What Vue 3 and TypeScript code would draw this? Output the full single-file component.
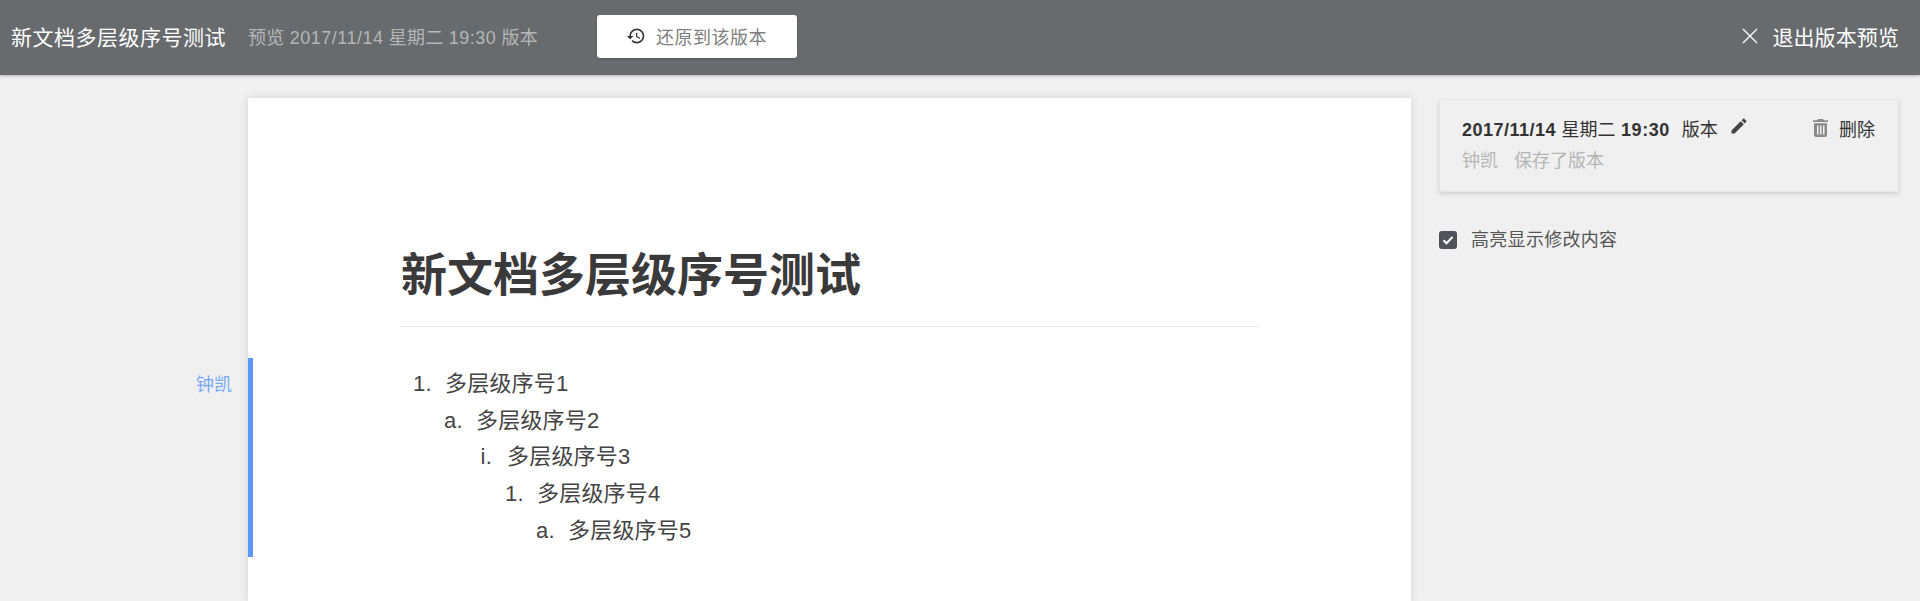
<script setup lang="ts">
interface ListItem {
  marker: string;
  text: string;
}

const title = '新文档多层级序号测试';

const items: ListItem[] = [
  { marker: '1.', text: '多层级序号1' },
  { marker: 'a.', text: '多层级序号2' },
  { marker: 'i.', text: '多层级序号3' },
  { marker: '1.', text: '多层级序号4' },
  { marker: 'a.', text: '多层级序号5' }
];
</script>

<template>
  <div class="app">
    <header class="topbar">
      <span class="doc-name">{{ title }}</span>
      <span class="preview-info">预览 <span class="num">2017/11/14</span> 星期二 <span class="num">19:30</span> 版本</span>
      <button class="restore" type="button">
        <svg width="20" height="20" viewBox="0 0 24 24" fill="#333">
          <path d="M13 3a9 9 0 0 0-9 9H1l3.89 3.89.07.14L9 12H6c0-3.87 3.13-7 7-7s7 3.13 7 7-3.13 7-7 7c-1.93 0-3.68-.79-4.94-2.06l-1.42 1.42A8.954 8.954 0 0 0 13 21a9 9 0 0 0 0-18zm-1 5v5l4.28 2.54.72-1.21-3.5-2.08V8H12z" />
        </svg>
        <span>还原到该版本</span>
      </button>
      <button class="exit" type="button">
        <svg width="16" height="16" viewBox="0 0 16 16" fill="none" stroke="#fff" stroke-width="1.4">
          <path d="M1 1l14 14M15 1L1 15" />
        </svg>
        <span>退出版本预览</span>
      </button>
    </header>

    <main class="workspace">
      <article class="doc">
        <h1 class="doc-title">{{ title }}</h1>
        <section class="changed">
          <span class="author">钟凯</span>
          <div
            v-for="(item, i) in items"
            :key="i"
            class="row"
            :class="`level-${i}`"
          >
            <span class="marker">{{ item.marker }}</span>
            <span>{{ item.text }}</span>
          </div>
        </section>
      </article>

      <aside class="side">
        <div class="version-card">
          <div class="version-main">
            <span class="version-date">2017/11/14 <span class="light">星期二</span> 19:30</span>
            <span class="version-label">版本</span>
            <svg class="edit" width="20" height="20" viewBox="0 0 24 24" fill="#444">
              <path d="M3 17.25V21h3.75L17.81 9.94l-3.75-3.75L3 17.25zM20.71 7.04c.39-.39.39-1.02 0-1.41l-2.34-2.34c-.39-.39-1.02-.39-1.41 0l-1.83 1.83 3.75 3.75 1.83-1.83z" />
            </svg>
            <span class="delete">
              <svg width="15" height="18" viewBox="0 0 15 18" fill="#8a8a8a">
                <path d="M5 0h5l1 1.2h4v1.9H0V1.2h4L5 0z" />
                <path fill-rule="evenodd" d="M1 4.200h13V16a2 2 0 0 1-2 2H3a2 2 0 0 1-2-2V4.200zM4 6.500v9h1.500v-9H4zm3 0v9h1.500v-9H7zm3 0v9h1.500v-9H10z" />
              </svg>
              删除
            </span>
          </div>
          <div class="version-meta">
            <span>钟凯</span>
            <span>保存了版本</span>
          </div>
        </div>

        <label class="highlight">
          <span class="check">
            <svg width="14" height="14" viewBox="0 0 14 14" fill="none" stroke="#fff" stroke-width="2">
              <path d="M2.500 7.300l3 3 6-6.300" />
            </svg>
          </span>
          <span>高亮显示修改内容</span>
        </label>
      </aside>
    </main>
  </div>
</template>

<style>
html,
body {
  margin: 0;
  overflow: hidden;
}
</style>

<style scoped>
.app {
  display: flex;
  flex-direction: column;
  height: 601px;
  overflow: hidden;
  background: #f0f0f0;
  font-family: "Liberation Sans", "Noto Sans CJK SC", sans-serif;
  color: #333;
}

.topbar {
  position: relative;
  z-index: 2;
  display: flex;
  flex: none;
  align-items: center;
  height: 75px;
  padding: 0 21px 2px 11px;
  box-sizing: border-box;
  background: #676b6e;
  box-shadow: 0 1px 3px rgba(0, 0, 0, 0.25);
}

.doc-name {
  margin-bottom: 2px;
  font-size: 21px;
  letter-spacing: 0.5px;
  color: #fff;
}

.preview-info {
  margin-left: 22px;
  margin-bottom: 2px;
  font-size: 18px;
  letter-spacing: 0.25px;
  color: #b4b6b8;
}

.preview-info .num {
  letter-spacing: 0.5px;
}

.restore {
  display: flex;
  align-items: center;
  gap: 10px;
  height: 43px;
  width: 200px;
  margin-left: 59px;
  padding: 0 0 2px 29px;
  box-sizing: border-box;
  border: 0;
  border-radius: 3px;
  background: #fff;
  box-shadow: 0 1px 2px rgba(0, 0, 0, 0.2);
  font: inherit;
  font-size: 18px;
  letter-spacing: 0.5px;
  color: #808080;
}

.exit {
  display: flex;
  align-items: center;
  gap: 14px;
  margin-left: auto;
  margin-bottom: 2px;
  padding: 0;
  border: 0;
  background: none;
  font: inherit;
  font-size: 21px;
  letter-spacing: 0.1px;
  color: #fff;
}

.workspace {
  display: flex;
  flex: 1;
  min-height: 0;
  padding: 23px 21px 0 248px;
  gap: 28px;
}

.doc {
  width: 1163px;
  flex: none;
  padding-top: 149px;
  box-sizing: border-box;
  background: #fff;
  box-shadow: 0 0 8px rgba(0, 0, 0, 0.12);
}

.doc-title {
  margin: 0 153px;
  padding-bottom: 23px;
  border-bottom: 1px solid #e6e8eb;
  font-size: 46px;
  line-height: 56px;
  font-weight: 700;
  color: #3a3a3a;
}

.changed {
  position: relative;
  height: 199px;
  margin-top: 31px;
  padding: 8px 0 0 192px;
  box-sizing: border-box;
  border-left: 5px solid #5b97f8;
  font-size: 22px;
  line-height: 36.700px;
  color: #444;
}

.author {
  position: absolute;
  top: 14px;
  left: -57px;
  font-size: 18px;
  line-height: 26px;
  color: #78a9f5;
}

.row {
  display: flex;
  letter-spacing: 0.2px;
}

.marker {
  flex: none;
  width: 32px;
  margin-left: -32px;
  padding-right: 15px;
  box-sizing: border-box;
  text-align: right;
}

.level-1 { padding-left: 31px; }
.level-2 { padding-left: 62px; }
.level-3 { padding-left: 92px; }
.level-4 { padding-left: 123px; }

.side {
  width: 460px;
  flex: none;
  padding-top: 1px;
}

.version-card {
  height: 93px;
  padding: 14px 23px 0 22px;
  box-sizing: border-box;
  border-radius: 2px;
  border: 1px solid #e6e6e6;
  background: #f0f0f0;
  box-shadow: 0 2px 4px rgba(0, 0, 0, 0.14);
}

.version-main {
  display: flex;
  align-items: center;
  height: 28px;
  font-size: 18px;
  color: #333;
}

.version-date {
  font-weight: 700;
  letter-spacing: 0.5px;
}

.version-date .light {
  font-weight: 400;
  letter-spacing: 0;
}

.version-label {
  margin-left: 12px;
}

.edit {
  margin-left: 11px;
  margin-top: -4px;
}

.delete {
  display: flex;
  align-items: center;
  gap: 11px;
  margin-left: auto;
}

.version-meta {
  display: flex;
  gap: 16px;
  margin-top: 5px;
  font-size: 18px;
  line-height: 28px;
  color: #b5b5b5;
}

.highlight {
  display: flex;
  align-items: center;
  gap: 14px;
  margin-top: 35px;
  font-size: 18px;
  line-height: 26px;
  letter-spacing: 0.3px;
  color: #555;
}

.check {
  display: flex;
  align-items: center;
  justify-content: center;
  width: 18px;
  height: 18px;
  border-radius: 3px;
  background: #505359;
}
</style>
